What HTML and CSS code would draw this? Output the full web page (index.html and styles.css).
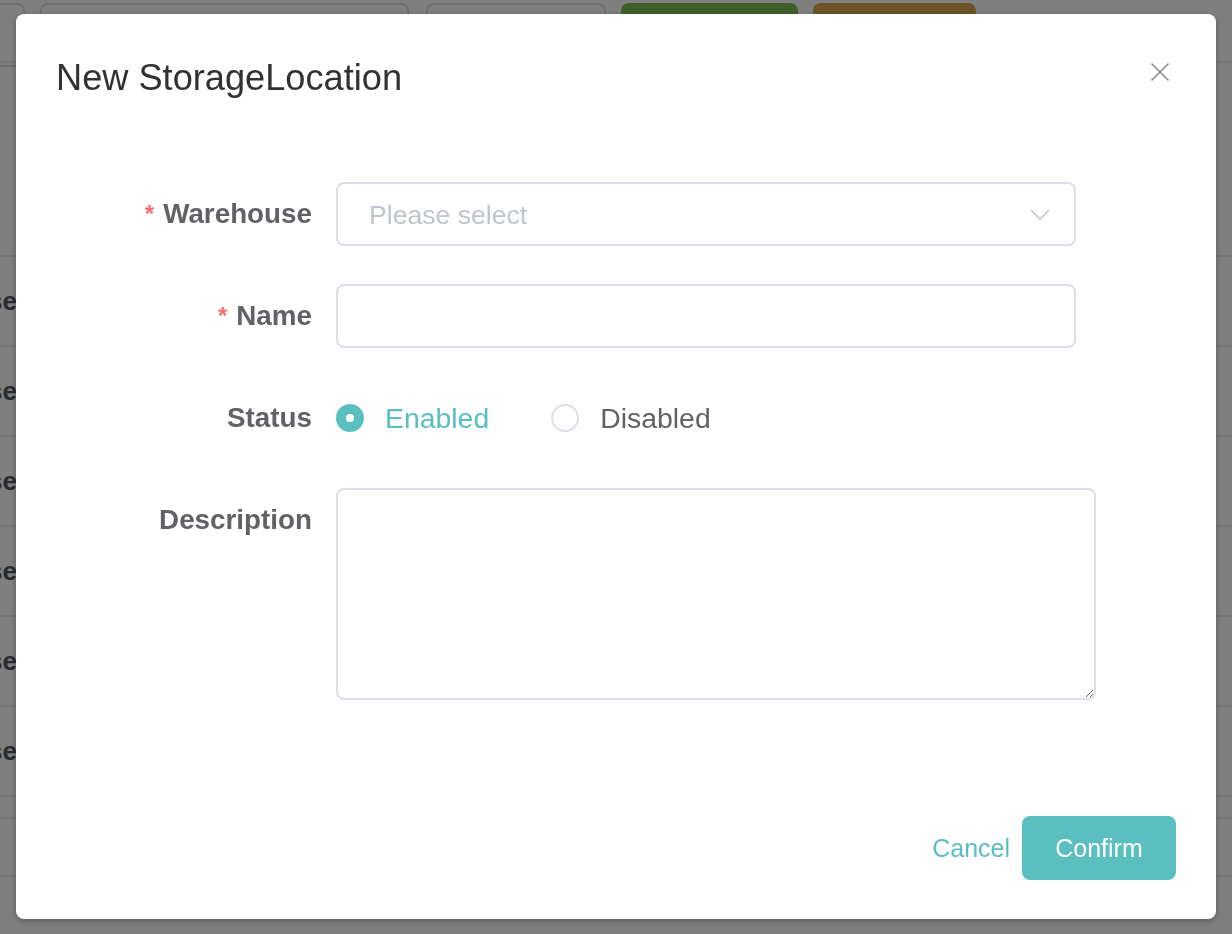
FILE: index.html
```html
<!DOCTYPE html>
<html lang="en">
<head>
<meta charset="utf-8">
<title>New StorageLocation</title>
<link rel="stylesheet" href="styles.css">
</head>
<body>
<div class="page">
  <div class="toolbar">
    <div class="tb-item tb-first"></div>
    <div class="tb-item tb-search"></div>
    <div class="tb-item tb-select"></div>
    <div class="tb-item tb-green"></div>
    <div class="tb-item tb-orange"></div>
  </div>
  <div class="table">
    <div class="thead"></div>
    <div class="row"><div class="cell">Warehouse</div></div>
    <div class="row"><div class="cell">Warehouse</div></div>
    <div class="row"><div class="cell">Warehouse</div></div>
    <div class="row"><div class="cell">Warehouse</div></div>
    <div class="row"><div class="cell">Warehouse</div></div>
    <div class="row"><div class="cell">Warehouse</div></div>
    <div class="row row-short"></div>
    <div class="row row-end"></div>
  </div>
</div>

<div class="overlay">
  <div class="dialog">
    <div class="dlg-header">
      <span class="dlg-title">New StorageLocation</span>
      <button class="dlg-close" type="button" aria-label="Close">
        <svg width="18" height="18" viewBox="0 0 18 18"><path d="M0.5 0.5 L17.5 17.5 M17.5 0.5 L0.5 17.5" stroke="#909399" stroke-width="1.6" fill="none"/></svg>
      </button>
    </div>
    <div class="dlg-body">
      <form class="form">
        <div class="form-item">
          <label class="form-label required">Warehouse</label>
          <div class="select">
            <span class="placeholder">Please select</span>
            <svg class="chevron" width="20" height="11" viewBox="0 0 20 11"><path d="M1 1 L10 10 L19 1" stroke="#c0c4cc" stroke-width="1.6" fill="none"/></svg>
          </div>
        </div>
        <div class="form-item">
          <label class="form-label required">Name</label>
          <input class="input" type="text">
        </div>
        <div class="form-item">
          <label class="form-label">Status</label>
          <div class="radio-group">
            <span class="radio checked"><span class="radio-dot"></span><span class="radio-label">Enabled</span></span>
            <span class="radio"><span class="radio-dot"></span><span class="radio-label">Disabled</span></span>
          </div>
        </div>
        <div class="form-item">
          <label class="form-label">Description</label>
          <textarea class="textarea"></textarea>
        </div>
      </form>
    </div>
    <div class="dlg-footer">
      <button class="btn-text" type="button">Cancel</button>
      <button class="btn-primary" type="button">Confirm</button>
    </div>
  </div>
</div>
</body>
</html>
```

FILE: styles.css
```css
* { box-sizing: border-box; }

html, body {
  margin: 0;
  padding: 0;
  width: 1232px;
  height: 934px;
  overflow: hidden;
  background: #ffffff;
  font-family: "Liberation Sans", Arial, Helvetica, sans-serif;
}

/* ---------- background page ---------- */
.page {
  width: 1232px;
  height: 934px;
}

.toolbar {
  display: flex;
  align-items: flex-start;
  gap: 15px;
  padding-top: 3px;
  height: 61px;
}

.tb-item {
  height: 64px;
  border-radius: 8px;
  flex: none;
}

.tb-first {
  width: 25px;
  border: 2px solid #dcdfe6;
  border-left: none;
  border-radius: 0 8px 8px 0;
}

.tb-search {
  width: 369px;
  border: 2px solid #dcdfe6;
}

.tb-select {
  width: 180px;
  margin-left: 2px;
  border: 2px solid #dcdfe6;
}

.tb-green {
  width: 177px;
  background: #7cbf55;
}

.tb-orange {
  width: 163px;
  background: #d8a652;
}

.table {
  border-top: 2px solid #ebeef5;
}

.thead {
  height: 192px;
}

.row {
  height: 90px;
  border-top: 2px solid #ebeef5;
  display: flex;
  align-items: center;
}

.row-short { height: 22px; }
.row-end { height: 60px; border-bottom: 2px solid #ebeef5; }

.cell {
  width: 17px;
  display: flex;
  justify-content: flex-end;
  white-space: nowrap;
  font-size: 26px;
  font-weight: bold;
  color: #55575c;
}

/* ---------- overlay & dialog ---------- */
.overlay {
  position: fixed;
  inset: 0;
  background: rgba(0, 0, 0, 0.5);
}

.dialog {
  position: relative;
  width: 1200px;
  margin: 14px 0 0 16px;
  background: #ffffff;
  border-radius: 8px;
  box-shadow: 0 2px 6px rgba(0, 0, 0, 0.3);
}

.dlg-header {
  padding: 40px 40px 20px;
}

.dlg-title {
  display: block;
  font-size: 36.2px;
  line-height: 48px;
  color: #303133;
}

.dlg-close {
  position: absolute;
  top: 49px;
  right: 47px;
  width: 18px;
  height: 18px;
  padding: 0;
  border: none;
  background: none;
  display: block;
}

.dlg-close svg { display: block; }

.dlg-body {
  padding: 60px 40px 96px;
}

.form {
  display: flex;
  flex-direction: column;
  gap: 38px;
  margin: 0;
}

.form-item {
  display: flex;
  align-items: flex-start;
}

.form-label {
  width: 280px;
  flex: none;
  padding-right: 24px;
  text-align: right;
  font-size: 27.8px;
  font-weight: bold;
  line-height: 64px;
  color: #606266;
}

.required::before {
  content: "*";
  color: #f56c6c;
  margin-right: 9px;
  font-size: 24px;
  vertical-align: 1px;
}

.select {
  width: 740px;
  height: 64px;
  border: 2px solid #dcdfe6;
  border-radius: 8px;
  display: flex;
  align-items: center;
  padding: 0 24px 0 31px;
}

.placeholder {
  font-size: 26.6px;
  color: #c0c4cc;
  padding-top: 2px;
}

.chevron {
  margin-left: auto;
  display: block;
}

.input {
  width: 740px;
  height: 64px;
  border: 2px solid #dcdfe6;
  border-radius: 8px;
  padding: 0 30px;
  font: inherit;
  font-size: 26px;
  outline: none;
  background: #fff;
}

.radio-group {
  height: 64px;
  display: flex;
  align-items: center;
}

.radio {
  display: flex;
  align-items: center;
  margin-right: 62px;
}

.radio-dot {
  width: 28px;
  height: 28px;
  border-radius: 50%;
  border: 2px solid #dcdfe6;
  background: #fff;
  position: relative;
  flex: none;
}

.radio.checked .radio-dot {
  border-color: #5bbfc0;
  background: #5bbfc0;
}

.radio.checked .radio-dot::after {
  content: "";
  position: absolute;
  left: 50%;
  top: 50%;
  width: 8px;
  height: 8px;
  margin: -4px 0 0 -4px;
  border-radius: 50%;
  background: #fff;
}

.radio-label {
  padding-left: 21px;
  font-size: 28.4px;
  color: #606266;
}

.radio.checked .radio-label {
  color: #5bbfc0;
}

.textarea {
  width: 760px;
  height: 212px;
  border: 2px solid #dcdfe6;
  border-radius: 8px;
  padding: 10px 30px;
  font: inherit;
  font-size: 26px;
  resize: vertical;
  outline: none;
  display: block;
}

.dlg-footer {
  display: flex;
  justify-content: flex-end;
  align-items: center;
  gap: 12px;
  padding: 20px 40px 39px;
}

.btn-text {
  border: none;
  background: none;
  padding: 0;
  font: inherit;
  font-size: 25px;
  color: #5bbfc0;
  height: 64px;
}

.btn-primary {
  width: 154px;
  height: 64px;
  border: none;
  border-radius: 8px;
  background: #5bbfc0;
  color: #ffffff;
  font: inherit;
  font-size: 25px;
  padding: 0;
}
```
